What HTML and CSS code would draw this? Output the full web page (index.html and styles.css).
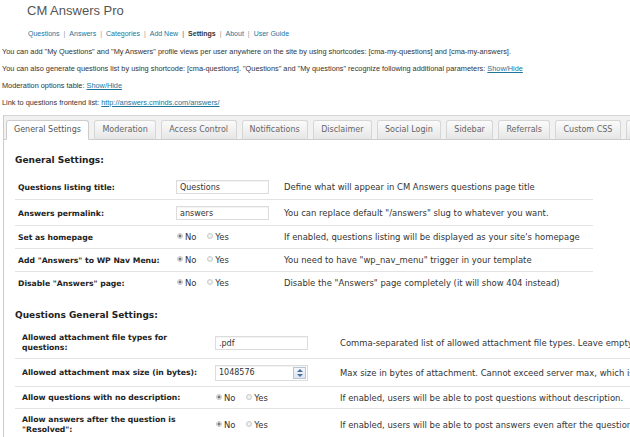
FILE: index.html
```html
<!DOCTYPE html>
<html lang="en">
<head>
  <meta charset="UTF-8" />
  <title>CM Answers Pro - Settings</title>
  <link rel="stylesheet" href="styles.css">
</head>
<body>
<div class="wrap">
  <h2 class="title">CM Answers Pro</h2>

  <ul class="subnav">
    <li><a href="#">Questions</a></li>
    <li><a href="#">Answers</a></li>
    <li><a href="#">Categories</a></li>
    <li><a href="#">Add New</a></li>
    <li class="current">Settings</li>
    <li><a href="#">About</a></li>
    <li><a href="#">User Guide</a></li>
  </ul>

  <p class="note">You can add "My Questions" and "My Answers" profile views per user anywhere on the site by using shortcodes: [cma-my-questions] and [cma-my-answers].</p>
  <p class="note">You can also generate questions list by using shortcode: [cma-questions]. "Questions" and "My questions" recognize following additional parameters: <a href="#">Show/Hide</a></p>
  <p class="note">Moderation options table: <a href="#">Show/Hide</a></p>
  <p class="note">Link to questions frontend list: <a href="#">http://answers.cminds.com/answers/</a></p>

  <div class="tabs-box">
    <ul class="tabs">
      <li class="active">General Settings</li>
      <li>Moderation</li>
      <li>Access Control</li>
      <li>Notifications</li>
      <li>Disclaimer</li>
      <li>Social Login</li>
      <li>Sidebar</li>
      <li>Referrals</li>
      <li>Custom CSS</li>
      <li class="more"></li>
    </ul>

    <div class="panel">
      <h3>General Settings:</h3>
      <table class="form-table general">
        <tr>
          <th>Questions listing title:</th>
          <td><input class="field" type="text" value="Questions"></td>
          <td class="desc">Define what will appear in CM Answers questions page title</td>
        </tr>
        <tr>
          <th>Answers permalink:</th>
          <td><input class="field" type="text" value="answers"></td>
          <td class="desc">You can replace default "/answers" slug to whatever you want.</td>
        </tr>
        <tr>
          <th>Set as homepage</th>
          <td><span class="radio on"></span>No <span class="radio"></span>Yes</td>
          <td class="desc">If enabled, questions listing will be displayed as your site's homepage</td>
        </tr>
        <tr>
          <th>Add "Answers" to WP Nav Menu:</th>
          <td><span class="radio on"></span>No <span class="radio"></span>Yes</td>
          <td class="desc">You need to have "wp_nav_menu" trigger in your template</td>
        </tr>
        <tr>
          <th>Disable "Answers" page:</th>
          <td><span class="radio on"></span>No <span class="radio"></span>Yes</td>
          <td class="desc">Disable the "Answers" page completely (it will show 404 instead)</td>
        </tr>
      </table>

      <h3 class="second">Questions General Settings:</h3>
      <table class="form-table questions">
        <tr>
          <th>Allowed attachment file types for questions:</th>
          <td><input class="field" type="text" value=".pdf"></td>
          <td class="desc">Comma-separated list of allowed attachment file types. Leave empty to allow all.</td>
        </tr>
        <tr>
          <th>Allowed attachment max size (in bytes):</th>
          <td>
            <div class="field number">
              <span>1048576</span>
              <span class="spin"><i class="up"></i><i class="down"></i></span>
            </div>
          </td>
          <td class="desc">Max size in bytes of attachment. Cannot exceed server max, which is 2M.</td>
        </tr>
        <tr>
          <th>Allow questions with no description:</th>
          <td><span class="radio on"></span>No <span class="radio"></span>Yes</td>
          <td class="desc">If enabled, users will be able to post questions without description.</td>
        </tr>
        <tr>
          <th>Allow answers after the question is "Resolved":</th>
          <td><span class="radio on"></span>No <span class="radio"></span>Yes</td>
          <td class="desc">If enabled, users will be able to post answers even after the question is resolved.</td>
        </tr>
      </table>
    </div>
  </div>
</div>
</body>
</html>
```

FILE: styles.css
```css
* {
  box-sizing: border-box;
  margin: 0;
  padding: 0;
}

html, body {
  overflow: hidden;
}

body {
  width: 630px;
  height: 437px;
  background-color: #fff;
  color: #333;
  font-family: 'Liberation Sans', Arial, sans-serif;
  font-size: 7.35px;
}

a {
  color: #21759b;
}

.wrap {
  padding-top: 3px;
}

.title {
  margin-left: 27px;
  font-size: 13px;
  font-weight: normal;
  line-height: 16px;
  color: #555;
}

.subnav {
  list-style: none;
  display: flex;
  margin: 10px 0 0 28px;
  font-size: 7px;
  line-height: 10px;
}

.subnav a {
  text-decoration: none;
}

.subnav li + li::before {
  content: "|";
  padding: 0 4px;
  color: #999;
}

.subnav .current {
  font-weight: bold;
  color: #333;
}

.note {
  margin: 8px 0 0 2px;
  line-height: 10px;
}

.note + .note {
  margin-top: 7px;
}

/* tabs */
.tabs-box {
  width: 720px;
  margin: 7px 0 0 3px;
  font-family: 'DejaVu Sans', Verdana, sans-serif;
}

.tabs {
  list-style: none;
  display: flex;
  gap: 5px;
  padding: 4px 0 0 2px;
  background-color: #f1f1f1;
  border-top: 1px solid #d4d4d4;
  border-left: 1px solid #ccc;
  border-bottom: 1px solid #ccc;
}

.tabs li {
  height: 20px;
  margin-bottom: -1px;
  padding: 0 7.5px 0 7px;
  border: 1px solid #d6d6d6;
  border-bottom-color: #ccc;
  border-radius: 3px 3px 0 0;
  background: linear-gradient(#fbfbfb, #e6e6e6);
  font-size: 8px;
  line-height: 18px;
  color: #666;
}

.tabs li.active {
  background: #fff;
  border-color: #ccc;
  border-bottom-color: #fff;
  color: #555;
}

.tabs li.more {
  width: 40px;
}

.panel {
  padding: 13px 0 0 11px;
  border-left: 1px solid #ccc;
  background-color: #fff;
  height: 300px;
}

.panel h3 {
  font-size: 9px;
  line-height: 14px;
  color: #222;
}

.panel h3.second {
  margin-top: 14px;
}

/* settings tables */
.form-table {
  border-collapse: collapse;
  margin-top: 7px;
  table-layout: fixed;
  font-family: 'DejaVu Sans', Verdana, sans-serif;
  font-size: 8.45px;
  color: #333;
}

.form-table.general {
  width: 578px;
}

.form-table.questions {
  margin-top: 5px;
  width: 700px;
}

.form-table tr {
  border-bottom: 1px solid #e3e3e3;
}

.form-table tr:last-child {
  border-bottom: none;
}

.form-table th {
  padding: 6px 3px 5px;
  text-align: left;
  font-size: 7.7px;
  line-height: 11px;
  color: #222;
  vertical-align: middle;
}

.form-table td {
  padding: 6px 0 5px;
  line-height: 11px;
  vertical-align: middle;
  white-space: nowrap;
}

.general th { width: 161px; }
.general td:nth-child(2) { width: 108px; }

.questions th {
  width: 200px;
  padding-left: 7px;
  padding-right: 12px;
  line-height: 10px;
}

.questions td { line-height: 10px; }
.questions td:nth-child(2) { width: 125px; }

.field {
  display: block;
  width: 93px;
  height: 14px;
  padding: 0 3px;
  border: 1px solid #dcdcdc;
  box-shadow: inset 0 1px 1px rgba(0,0,0,0.05);
  background: #fff;
  font-family: 'DejaVu Sans', Verdana, sans-serif;
  font-size: 8px;
  color: #333;
}

.number {
  display: flex;
  align-items: center;
  justify-content: space-between;
  height: 16px;
  padding-right: 1px;
}

.spin {
  display: flex;
  flex-direction: column;
  align-items: center;
  justify-content: space-around;
  width: 13px;
  height: 12px;
  border: 1px solid #b9c6d6;
  background: linear-gradient(#f4f7fb, #dde5ef);
}

.spin i {
  width: 0;
  height: 0;
  border-left: 3px solid transparent;
  border-right: 3px solid transparent;
}

.spin .up { border-bottom: 3px solid #4a6f9c; }
.spin .down { border-top: 3px solid #4a6f9c; }

.radio {
  display: inline-block;
  width: 6px;
  height: 6px;
  margin: 0 2px 0 1px;
  border: 1px solid #ccc;
  border-radius: 50%;
  background: radial-gradient(#fafafa, #e2e2e2);
  vertical-align: 1px;
}

.radio.on {
  background: radial-gradient(#777 0, #777 1.2px, #eee 1.8px);
}

td .radio:nth-of-type(2) {
  margin-left: 8px;
}

.desc {
  color: #333;
}
```
